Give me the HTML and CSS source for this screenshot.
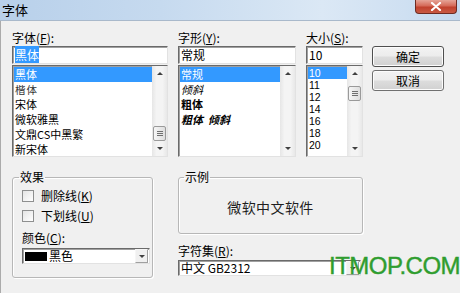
FILE: index.html
```html
<!DOCTYPE html>
<html lang="zh-CN">
  <head>
    <meta charset="UTF-8" />
    <meta name="viewport" content="width=device-width, initial-scale=1.0" />
    <link rel="stylesheet" href="styles.css">
    <title>字体</title>
  </head>

  <body>
    <div class="dialog">
      <div class="titlebar">
        <span class="title">字体</span>
        <span class="closeButton">
          <svg width="12" height="9" viewBox="0 0 12 9">
            <path d="M2 1 L10 8 M10 1 L2 8" stroke="#fff" stroke-width="2.2" stroke-linecap="round" />
          </svg>
        </span>
      </div>

      <div class="client">
        <div class="topRow">
          <div class="column fontColumn">
            <div class="label">字体(<u>F</u>):</div>
            <div class="edit"><span class="picked">黑体</span></div>
            <div class="list">
              <ul class="items">
                <li class="active">黑体</li>
                <li class="kai">楷体</li>
                <li>宋体</li>
                <li>微软雅黑</li>
                <li>文鼎CS中黑繁</li>
                <li>新宋体</li>
              </ul>
              <div class="scroll">
                <span class="arrow up"></span>
                <span class="thumb bottom"></span>
                <span class="arrow down"></span>
              </div>
            </div>
          </div>

          <div class="column styleColumn">
            <div class="label">字形(<u>Y</u>):</div>
            <div class="edit">常规</div>
            <div class="list">
              <ul class="items">
                <li class="active">常规</li>
                <li class="italic">倾斜</li>
                <li class="bold">粗体</li>
                <li class="bold italic">粗体&nbsp; 倾斜</li>
              </ul>
              <div class="scroll">
                <span class="arrow up"></span>
                <span class="spacer"></span>
                <span class="arrow down"></span>
              </div>
            </div>
          </div>

          <div class="column sizeColumn">
            <div class="label">大小(<u>S</u>):</div>
            <div class="edit">10</div>
            <div class="list">
              <ul class="items small">
                <li class="active">10</li>
                <li>11</li>
                <li>12</li>
                <li>14</li>
                <li>16</li>
                <li>18</li>
                <li>20</li>
              </ul>
              <div class="scroll">
                <span class="arrow up"></span>
                <span class="thumb top"></span>
                <span class="spacer"></span>
                <span class="arrow down"></span>
              </div>
            </div>
          </div>

          <div class="buttons">
            <button class="button default">确定</button>
            <button class="button">取消</button>
          </div>
        </div>

        <div class="bottomRow">
          <fieldset class="group effects">
            <legend>效果</legend>
            <div class="check first"><span class="box"></span><span>删除线(<u>K</u>)</span></div>
            <div class="check"><span class="box"></span><span>下划线(<u>U</u>)</span></div>
            <div class="label colorLabel">颜色(<u>C</u>):</div>
            <div class="combo colorCombo">
              <span class="swatch"></span>
              <span class="comboText">黑色</span>
              <span class="dropButton"><span class="arrow down"></span></span>
            </div>
          </fieldset>

          <div class="previewColumn">
            <fieldset class="group sample">
              <legend>示例</legend>
              <div class="sampleText">微软中文软件</div>
            </fieldset>
            <div class="label charsetLabel">字符集(<u>R</u>):</div>
            <div class="combo charsetCombo">
              <span class="comboText">中文 GB2312</span>
              <span class="dropButton"><span class="arrow down"></span></span>
            </div>
          </div>
        </div>
      </div>

      <div class="watermark">ITMOP.COM</div>
    </div>
  </body>
</html>
```

FILE: styles.css
```css
* {
  box-sizing: border-box;
}
body {
  margin: 0px;
  background-color: #f0f0f0;
  font-family: "Noto Sans CJK SC", "Liberation Sans", sans-serif;
  font-size: 12px;
  color: #000;
}
u {
  text-decoration-thickness: 1px;
  text-underline-offset: 1px;
}
.dialog {
  position: relative;
  width: 460px;
  height: 293px;
  overflow: hidden;
  background-color: #f0f0f0;
}

/* title bar */
.titlebar {
  display: flex;
  justify-content: space-between;
  align-items: flex-start;
  height: 21px;
  background: linear-gradient(90deg, #b8d0ea 0%, #c6daef 35%, #dbe8f5 70%, #cfe0f2 88%, #c4d9ee 100%);
  border-bottom: 1px solid #a9b9cb;
}
.title {
  padding: 3px 0px 0px 2px;
  font-size: 13px;
  line-height: 14px;
}
.closeButton {
  display: flex;
  align-items: center;
  justify-content: center;
  width: 42px;
  height: 14px;
  margin-right: 3px;
  border: 1px solid #6e2b22;
  border-top: none;
  border-radius: 0px 0px 4px 4px;
  background: linear-gradient(#e6a497, #d56a58 45%, #c1412d 55%, #c85a44);
}

/* client */
.client {
  height: 272px;
  padding: 10px 0px 0px 11px;
  border-left: 1px solid #ababab;
}
.topRow {
  display: flex;
  align-items: flex-start;
  gap: 10px;
}
.column {
  display: flex;
  flex-direction: column;
}
.fontColumn {
  width: 156px;
}
.styleColumn {
  width: 118px;
}
.sizeColumn {
  width: 57px;
}
.label {
  line-height: 14px;
  height: 14px;
  margin-bottom: 1px;
}
.edit {
  height: 18px;
  padding-left: 2px;
  line-height: 16px;
  background-color: #fff;
  border: 1px solid #e2e2e2;
  border-top-color: #6a6a6a;
  border-left-color: #6a6a6a;
  box-shadow: inset 1px 1px 0px #a0a0a0;
}
.picked {
  background-color: #3399ff;
  color: #fff;
}
.list {
  display: flex;
  height: 92px;
  margin-top: 1px;
  background-color: #fff;
  border: 1px solid #e2e2e2;
  border-top-color: #6a6a6a;
  border-left-color: #6a6a6a;
  box-shadow: inset 1px 1px 0px #a0a0a0;
  overflow: hidden;
}
.items {
  flex: 1;
  list-style: none;
  margin: 0px;
  padding: 1px 0px 0px 1px;
}
.items li {
  height: 15px;
  line-height: 15px;
  padding-left: 1px;
  font-size: 11px;
  white-space: nowrap;
}
.items.small li {
  height: 12px;
  line-height: 12px;
  font-family: "Liberation Sans", sans-serif;
  font-size: 10.5px;
}
.items li.active {
  background-color: #3399ff;
  color: #fff;
}
.items .kai {
  font-size: 10.5px;
  color: #333;
  letter-spacing: 1px;
}
.items .bold {
  font-weight: bold;
}
.items .italic {
  font-style: italic;
}

/* scrollbars */
.scroll {
  display: flex;
  flex-direction: column;
  align-items: center;
  width: 15px;
  background: linear-gradient(90deg, #e6e6e6, #f4f4f4 30%, #f4f4f4 70%, #e8e8e8);
}
.spacer {
  flex: 1;
}
.arrow {
  display: block;
  width: 0px;
  height: 0px;
  border-left: 3px solid transparent;
  border-right: 3px solid transparent;
}
.scroll .arrow {
  margin: 6px 0px;
}
.arrow.up {
  border-bottom: 3px solid #404040;
}
.arrow.down {
  border-top: 3px solid #404040;
}
.thumb {
  width: 13px;
  height: 15px;
  border: 1px solid #9a9a9a;
  border-radius: 2px;
  background:
    repeating-linear-gradient(#6f6f6f 0px 1px, transparent 1px 2px) center / 6px 5px no-repeat,
    linear-gradient(90deg, #f6f6f6, #dedede);
}
.thumb.top {
  margin-top: 5px;
}
.thumb.bottom {
  margin-top: auto;
}

/* buttons */
.buttons {
  display: flex;
  flex-direction: column;
  gap: 3px;
  margin: 15px 0px 0px -1px;
}
.button {
  width: 72px;
  height: 21px;
  padding: 0px;
  border: 1px solid #707070;
  border-radius: 3px;
  background: linear-gradient(#f3f3f3, #ececec 48%, #dddddd 52%, #d1d1d1);
  box-shadow: inset 0px 0px 0px 1px #fcfcfc;
  font-family: inherit;
  font-size: 12px;
  color: #000;
}
.button.default {
  border-color: #4f4f4f;
}

/* bottom half */
.bottomRow {
  display: flex;
  align-items: flex-start;
  margin-top: 14px;
}
.group {
  margin: 0px;
  border: 1px solid #b7b7b7;
  border-radius: 3px;
  box-shadow: inset 1px 1px 0px #fff, 1px 1px 0px #fff;
}
.group legend {
  padding: 0px 1px;
  line-height: 12px;
}
.effects {
  width: 141px;
  padding: 0px 0px 13px 6px;
}
.check {
  display: flex;
  align-items: center;
  gap: 7px;
  height: 14px;
  margin: 6px 0px 0px 3px;
  line-height: 14px;
}
.box {
  width: 12px;
  height: 12px;
  border: 1px solid #8e8f8f;
  background: linear-gradient(135deg, #e4e4e4, #ffffff);
}
.colorLabel {
  margin: 8px 0px 0px 3px;
}
.combo {
  display: flex;
  align-items: center;
  height: 16px;
  background-color: #fff;
  border: 1px solid #e2e2e2;
  border-top-color: #6a6a6a;
  border-left-color: #6a6a6a;
  box-shadow: inset 1px 1px 0px #a0a0a0;
}
.colorCombo {
  width: 128px;
  margin: 3px 0px 0px 3px;
}
.swatch {
  width: 22px;
  height: 9px;
  margin: 0px 2px 0px 2px;
  background-color: #000;
}
.comboText {
  flex: 1;
  line-height: 14px;
}
.dropButton {
  display: flex;
  align-items: center;
  justify-content: center;
  width: 13px;
  height: 14px;
  margin-right: 1px;
  border: 1px solid #a0a0a0;
  border-top-color: #f6f6f6;
  border-left-color: #f6f6f6;
  background-color: #f0f0f0;
}
.previewColumn {
  display: flex;
  flex-direction: column;
  width: 185px;
  margin-left: 25px;
}
.sample {
  height: 63px;
  padding: 0px 5px;
}
.sampleText {
  display: flex;
  align-items: center;
  justify-content: center;
  height: 48px;
  font-size: 14px;
  letter-spacing: 0.4px;
  color: #1e1e1e;
}
.charsetLabel {
  margin-top: 10px;
}
.charsetCombo {
  width: 183px;
  margin-top: 1px;
}
.charsetCombo .comboText {
  padding-left: 2px;
}

.watermark {
  position: absolute;
  left: 329px;
  top: 252px;
  font-family: "Liberation Sans", Arial, sans-serif;
  font-size: 24px;
  letter-spacing: -0.5px;
  color: #2f9d2f;
  -webkit-text-stroke: 0.4px #2f9d2f;
}
```
